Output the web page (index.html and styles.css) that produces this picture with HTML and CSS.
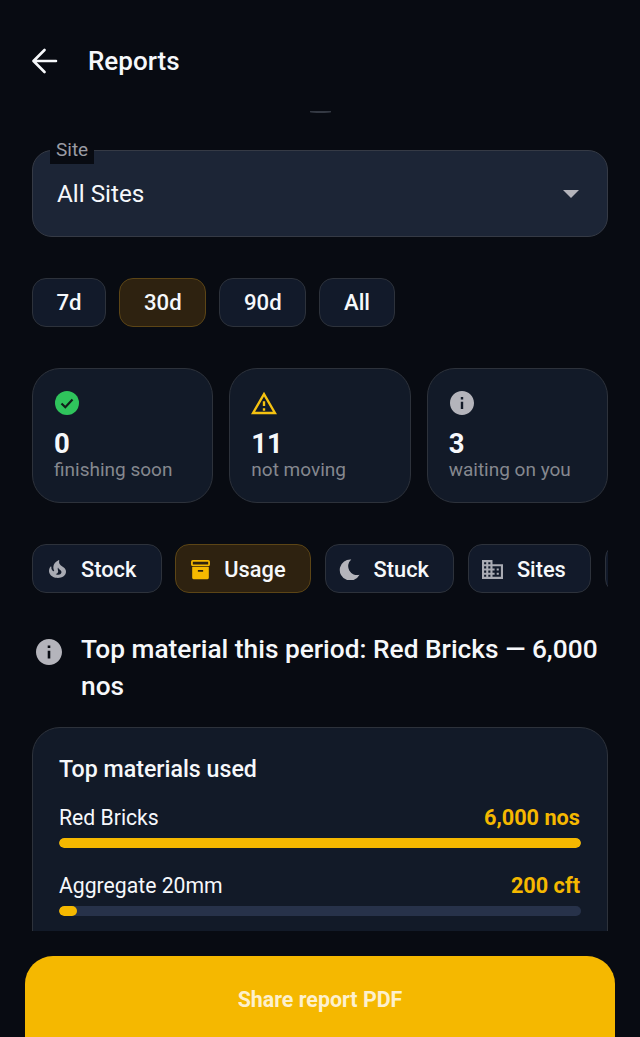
FILE: index.html
```html
<!DOCTYPE html>
<html lang="en">
<head>
    <meta charset="UTF-8">
    <meta name="viewport" content="width=device-width, initial-scale=1">
    <title>Reports</title>
    <link rel="stylesheet" href="styles.css">
</head>
<body>
    <div class="screen">
        <header class="topbar">
            <svg class="back" viewBox="0 0 26 26" fill="none" stroke="currentColor" stroke-width="2.6" stroke-linecap="round" stroke-linejoin="round">
                <path d="M24 13H1.800M12.500 2 1.500 13l11 11"/>
            </svg>
            <h1>Reports</h1>
        </header>

        <main class="scroll">
            <span class="pull"></span>

            <div class="select">
                <span class="select-label">Site</span>
                <span class="select-value">All Sites</span>
                <span class="caret"></span>
            </div>

            <div class="ranges">
                <span class="chip">7d</span>
                <span class="chip active">30d</span>
                <span class="chip">90d</span>
                <span class="chip">All</span>
            </div>

            <div class="stats">
                <div class="stat">
                    <svg class="stat-icon" viewBox="0 0 24 24">
                        <circle cx="12" cy="12" r="12" fill="#2fc45c"/>
                        <path d="M6.500 12.500l3.800 3.700 7.200-7.600" fill="none" stroke="#11201a" stroke-width="2.200"/>
                    </svg>
                    <div class="stat-num">0</div>
                    <div class="stat-txt">finishing soon</div>
                </div>
                <div class="stat">
                    <svg class="stat-icon warn" viewBox="1 2 22 19">
                        <path fill="#f5c211" d="M12 5.990 19.530 19H4.470L12 5.990M12 2 1 21h22L12 2zm1 14h-2v2h2v-2zm0-6h-2v4h2v-4z"/>
                    </svg>
                    <div class="stat-num">11</div>
                    <div class="stat-txt">not moving</div>
                </div>
                <div class="stat">
                    <svg class="stat-icon" viewBox="2 2 20 20">
                        <path fill="#b4b4bb" d="M12 2C6.480 2 2 6.480 2 12s4.480 10 10 10 10-4.480 10-10S17.520 2 12 2zm1 15h-2v-6h2v6zm0-8h-2V7h2v2z"/>
                    </svg>
                    <div class="stat-num">3</div>
                    <div class="stat-txt">waiting on you</div>
                </div>
            </div>

            <div class="tabs">
                <span class="tab">
                    <svg class="tab-icon flame" viewBox="4 1.400 16 20.700" preserveAspectRatio="none"><path fill="#a9abb3" d="M19.480 12.350c-1.570-4.080-7.160-4.300-5.810-10.230.1-.44-.37-.78-.75-.55C9.290 3.710 6.680 8 8.870 13.620c.18.46-.36.89-.75.59-1.810-1.370-2-3.340-1.840-4.750.06-.52-.62-.77-.91-.34C4.690 10.160 4 11.840 4 14.370c.38 5.600 5.110 7.320 6.810 7.540 2.430.31 5.060-.14 6.950-1.870 2.080-1.930 2.840-5.010 1.720-7.690zm-9.280 5.030c1.440-.35 2.180-1.390 2.380-2.310.33-1.430-.96-2.830-.09-5.090.33 1.870 3.270 3.040 3.270 5.080.08 2.530-2.660 4.700-5.560 2.320z"/></svg>
                    Stock
                </span>
                <span class="tab active">
                    <svg class="tab-icon" viewBox="0 0 24 24">
                        <rect x="2.200" y="2.200" width="19.600" height="5" rx="1" fill="none" stroke="#f5b800" stroke-width="2"/>
                        <path fill="#f5b800" fill-rule="evenodd" d="M2.500 9h19v12.500a1.500 1.500 0 0 1-1.500 1.500H4a1.500 1.500 0 0 1-1.500-1.500zM9 12.500v2h6v-2z"/>
                    </svg>
                    Usage
                </span>
                <span class="tab">
                    <svg class="tab-icon" viewBox="0 0 24 24"><path fill="#b4b4bb" d="M14 .5A12 12 0 1 0 23.500 18A10.200 10.200 0 0 1 14 .5Z"/></svg>
                    Stuck
                </span>
                <span class="tab">
                    <svg class="tab-icon" viewBox="2 3 20 18"><path fill="#a9abb3" d="M18 15h-2v2h2m0-6h-2v2h2m2 6h-8v-2h2v-2h-2v-2h2v-2h-2V9h8M10 7H8V5h2m0 6H8V9h2m0 6H8v-2h2m0 6H8v-2h2M6 7H4V5h2m0 6H4V9h2m0 6H4v-2h2m0 6H4v-2h2m6-10V3H2v18h20V7H12z"/></svg>
                    Sites
                </span>
                <span class="tab"></span>
            </div>

            <div class="insight">
                <svg class="insight-icon" viewBox="2 2 20 20">
                    <path fill="#b4b4bb" d="M12 2C6.480 2 2 6.480 2 12s4.480 10 10 10 10-4.480 10-10S17.520 2 12 2zm1 15h-2v-6h2v6zm0-8h-2V7h2v2z"/>
                </svg>
                <p>Top material this period: Red Bricks — 6,000 nos</p>
            </div>

            <section class="card">
                <h2>Top materials used</h2>
                <div class="row">
                    <div class="row-head"><span>Red Bricks</span><b>6,000 nos</b></div>
                    <div class="track"><div class="fill" style="width: 100%"></div></div>
                </div>
                <div class="row">
                    <div class="row-head"><span>Aggregate 20mm</span><b>200 cft</b></div>
                    <div class="track"><div class="fill" style="width: 3.4%"></div></div>
                </div>
            </section>
        </main>

        <footer class="footer">
            <button class="share">Share report PDF</button>
        </footer>
    </div>
</body>
</html>
```

FILE: styles.css
```css
body {
    margin: 0;
    padding: 0;
    background: #080b12;
    color: #f6f8fb;
    font-family: Roboto, "Noto Sans", sans-serif;
}

.screen {
    display: flex;
    flex-direction: column;
    height: 1037px;
    overflow: hidden;
}

.topbar {
    display: flex;
    align-items: center;
    gap: 30px;
    height: 111px;
    padding: 11px 32px 0;
    box-sizing: border-box;
    flex-shrink: 0;
}

.back {
    width: 26px;
    height: 26px;
}

h1 {
    margin: 0;
    font-size: 26px;
    font-weight: 500;
}

.scroll {
    position: relative;
    height: 820px;
    flex-shrink: 0;
    overflow: hidden;
    padding: 39px 32px 0;
    box-sizing: border-box;
}

.pull {
    position: absolute;
    left: 310px;
    top: 0;
    width: 21px;
    height: 1.5px;
    border-radius: 0 0 50% 50%;
    background: #343943;
}

.select {
    position: relative;
    display: flex;
    align-items: center;
    justify-content: space-between;
    height: 87px;
    padding: 0 28px 0 24px;
    box-sizing: border-box;
    background: #1c2536;
    border: 1.5px solid #353a45;
    border-radius: 20px;
}

.select-label {
    position: absolute;
    left: 17px;
    top: -12px;
    padding: 0 6px;
    height: 25px;
    line-height: 22px;
    font-size: 19px;
    color: #9a9ca4;
    background: #080b12;
}

.select-value {
    font-size: 24.3px;
}

.caret {
    width: 0;
    height: 0;
    border-left: 8px solid transparent;
    border-right: 8px solid transparent;
    border-top: 8px solid #b4b4bb;
}

.ranges {
    display: flex;
    gap: 13.3px;
    margin-top: 41px;
}

.chip {
    display: flex;
    align-items: center;
    height: 49px;
    padding: 0 23.5px 1px;
    box-sizing: border-box;
    font-size: 22.2px;
    font-weight: 500;
    background: #121a2a;
    border: 1.5px solid #2d323b;
    border-radius: 14px;
}

.chip.active, .tab.active {
    background: #2e2210;
    border-color: #5c4516;
}

.stats {
    display: flex;
    gap: 16px;
    margin-top: 41px;
}

.stat {
    flex: 1;
    height: 135px;
    padding: 22px 21px 0;
    box-sizing: border-box;
    background: #121a28;
    border: 1.5px solid #2d323b;
    border-radius: 28px;
}

.stat-icon {
    display: block;
    width: 24px;
    height: 24px;
    margin-left: 1px;
}

.stat-icon.warn {
    width: 26px;
    margin-left: 0;
}

.stat-num {
    margin-top: 14px;
    font-size: 27.5px;
    font-weight: 700;
    line-height: 30px;
}

.stat-txt {
    margin-top: -1px;
    font-size: 19px;
    line-height: 24px;
    color: #85888f;
}

.tabs {
    display: flex;
    gap: 13.5px;
    margin-top: 41px;
    overflow: hidden;
}

.tab {
    display: flex;
    align-items: center;
    flex-shrink: 0;
    gap: 13.5px;
    height: 49px;
    padding: 1px 24.5px 0 13.5px;
    box-sizing: border-box;
    font-size: 21.8px;
    font-weight: 500;
    background: #121a2a;
    border: 1.5px solid #2d323b;
    border-radius: 14px;
}

.tab:last-child {
    width: 40px;
}

.tab-icon {
    width: 21px;
    height: 21px;
}

.tab-icon.flame {
    width: 17px;
    height: 18px;
    margin: 0 2px;
}

.insight {
    display: flex;
    gap: 19px;
    margin: 38px 0 22px 4px;
}

.insight-icon {
    width: 26px;
    height: 26px;
    flex-shrink: 0;
    margin-top: 8px;
}

.insight p {
    margin: 0;
    font-size: 26.3px;
    font-weight: 500;
    line-height: 37px;
}

.card {
    height: 300px;
    padding: 27px 26px 0;
    box-sizing: border-box;
    background: #121a28;
    border: 1.5px solid #2d323b;
    border-radius: 28px;
}

h2 {
    margin: 0 0 21px;
    font-size: 23.2px;
    font-weight: 500;
    line-height: 28px;
}

.row {
    margin-bottom: 24px;
}

.row-head {
    display: flex;
    justify-content: space-between;
    align-items: center;
    height: 26px;
    font-size: 21.2px;
}

.row-head b {
    padding-right: 1px;
    font-size: 21.7px;
    font-weight: 700;
    color: #f5b800;
}

.track {
    height: 10px;
    margin-top: 8px;
    background: #27324a;
    border-radius: 5px;
    overflow: hidden;
}

.fill {
    height: 100%;
    background: #f5b800;
    border-radius: 5px;
}

.footer {
    padding: 25px 25px 0;
}

.share {
    display: block;
    width: 100%;
    height: 110px;
    padding: 0 0 24px;
    border: none;
    border-radius: 28px;
    background: #f5b800;
    color: #fdf0cd;
    font-family: inherit;
    font-size: 21.4px;
    font-weight: 700;
    text-align: center;
}
```
